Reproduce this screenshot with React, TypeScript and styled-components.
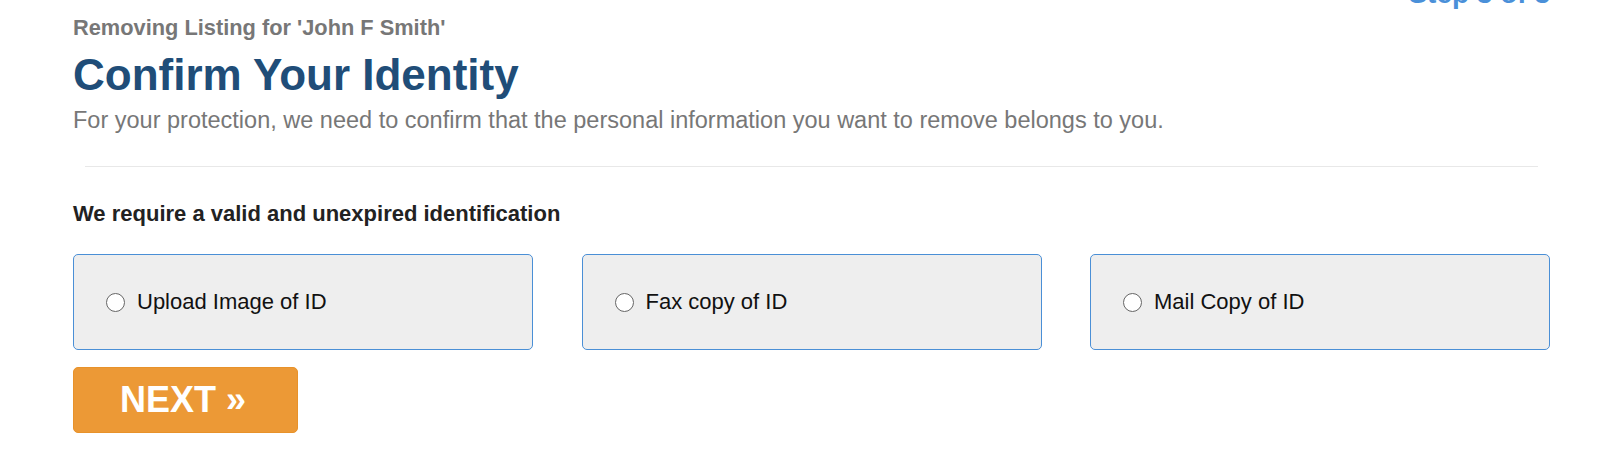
import React, { useState } from "react";
import styled, { createGlobalStyle } from "styled-components";

const Global = createGlobalStyle`
  html, body { margin: 0; padding: 0; background: #fff; }
  body { font-family: "Liberation Sans", Arial, Helvetica, sans-serif; overflow: hidden; }
  * { box-sizing: border-box; }
`;

const Page = styled.div`
  width: 1600px;
  height: 469px;
  padding: 0 50px 0 73px;
  display: flex;
  flex-direction: column;
`;

const StepRow = styled.div`
  display: flex;
  justify-content: flex-end;
  height: 0;
`;

const StepLabel = styled.div`
  margin-top: -22px;
  font-size: 28px;
  line-height: 32px;
  font-weight: 700;
  color: #4a90d9;
`;

const Subject = styled.div`
  margin-top: 16px;
  font-size: 21.8px;
  line-height: 24px;
  font-weight: 700;
  color: #777;
`;

const Title = styled.h1`
  margin: 10px 0 0;
  font-size: 44px;
  line-height: 50px;
  font-weight: 700;
  color: #204d78;
`;

const Lead = styled.p`
  margin: 6px 0 0;
  font-size: 23.5px;
  line-height: 28px;
  color: #777;
`;

const Divider = styled.hr`
  margin: 32px 12px 0;
  border: 0;
  border-top: 1px solid #e8e8e8;
  height: 0;
`;

const Requirement = styled.div`
  margin-top: 34px;
  font-size: 22px;
  line-height: 26px;
  font-weight: 700;
  color: #222;
`;

const Options = styled.div`
  margin-top: 27px;
  display: grid;
  grid-template-columns: repeat(3, 460px);
  justify-content: space-between;
`;

const OptionBox = styled.label`
  height: 96px;
  display: flex;
  align-items: center;
  gap: 12px;
  padding-left: 32px;
  background: #eeeeee;
  border: 1px solid #4a8fd6;
  border-radius: 5px;
  font-size: 22px;
  color: #111;
  cursor: pointer;
`;

const Radio = styled.input`
  appearance: none;
  -webkit-appearance: none;
  width: 19px;
  height: 19px;
  margin: 0;
  border: 1px solid #666;
  border-radius: 50%;
  background: #fff;
  flex: none;
  &:checked {
    background: radial-gradient(circle, #1a73e8 0 4px, #fff 5px);
    border-color: #1a73e8;
  }
`;

const NextButton = styled.button`
  margin-top: 17px;
  width: 225px;
  height: 66px;
  padding: 0 5px 0 0;
  border: 1px solid #e8922a;
  border-radius: 5px;
  background: #ec9936;
  color: #fff;
  font-family: "Liberation Sans", Arial, sans-serif;
  font-size: 36px;
  font-weight: 700;
  display: flex;
  align-items: center;
  justify-content: center;
  cursor: pointer;
`;

const options = ["Upload Image of ID", "Fax copy of ID", "Mail Copy of ID"];

export default function App() {
  const [choice, setChoice] = useState<string | null>(null);
  return (
    <>
      <Global />
      <Page>
        <StepRow>
          <StepLabel>Step 3 of 3</StepLabel>
        </StepRow>
        <Subject>Removing Listing for 'John F Smith'</Subject>
        <Title>Confirm Your Identity</Title>
        <Lead>
          For your protection, we need to confirm that the personal information you want to remove belongs to you.
        </Lead>
        <Divider />
        <Requirement>We require a valid and unexpired identification</Requirement>
        <Options>
          {options.map((o) => (
            <OptionBox key={o}>
              <Radio
                type="radio"
                name="idmethod"
                checked={choice === o}
                onChange={() => setChoice(o)}
              />
              {o}
            </OptionBox>
          ))}
        </Options>
        <NextButton>NEXT »</NextButton>
      </Page>
    </>
  );
}
